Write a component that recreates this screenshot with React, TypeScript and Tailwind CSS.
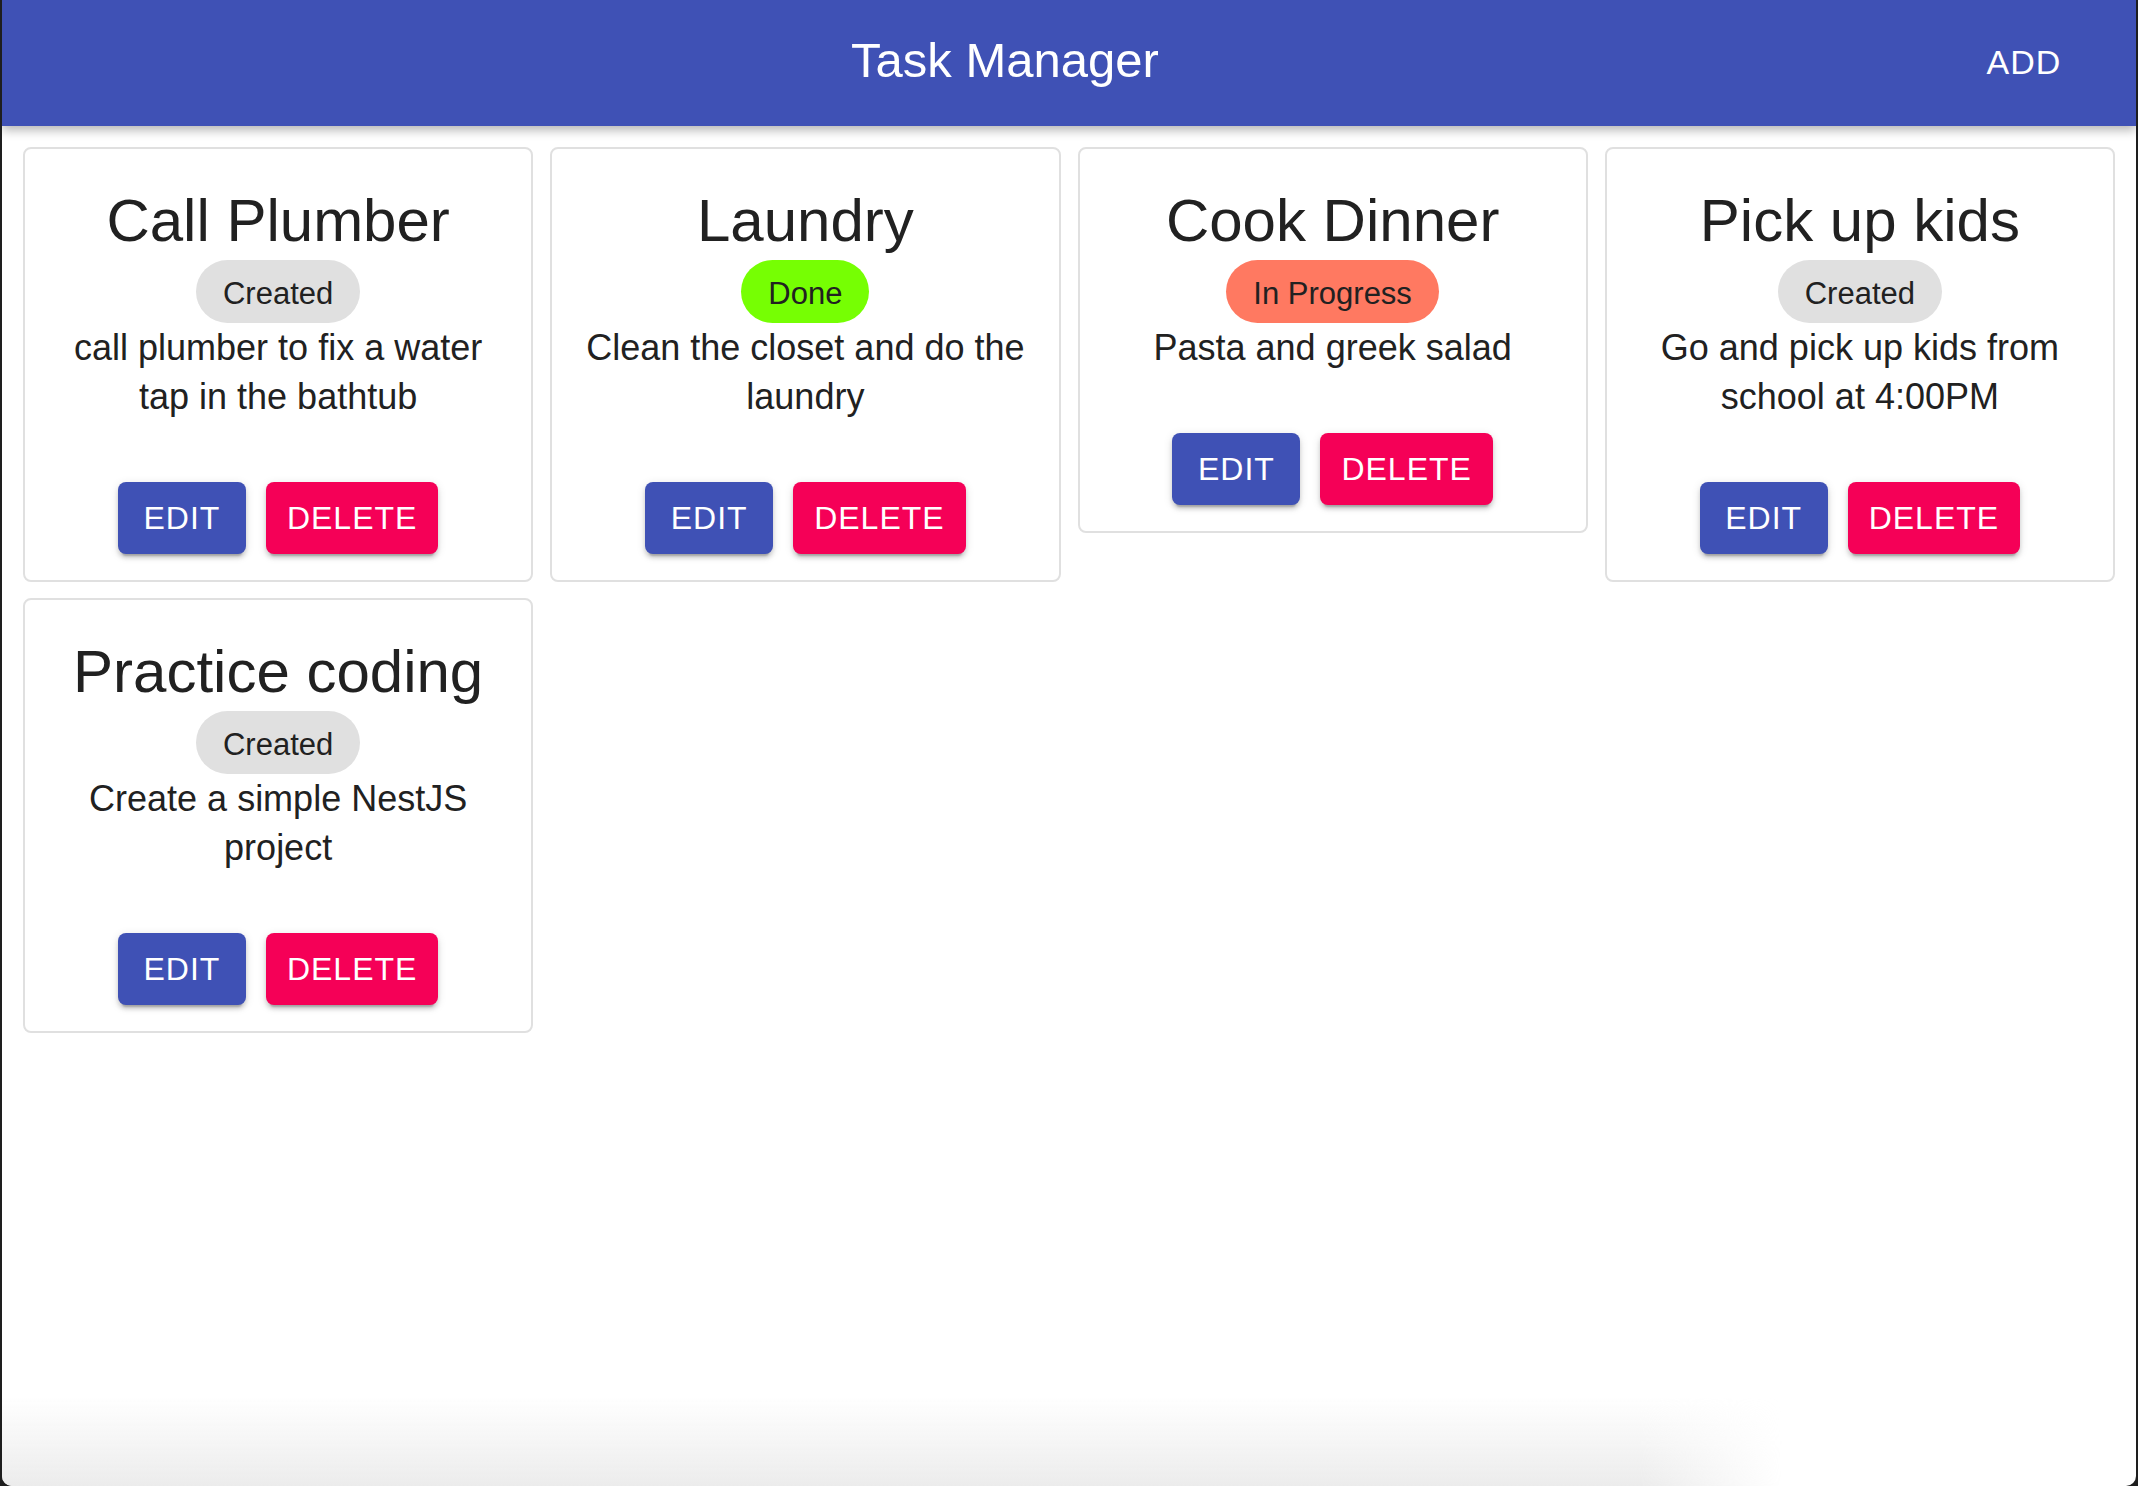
const tasks = [
  { title: 'Call Plumber', status: 'Created', description: 'call plumber to fix a water tap in the bathtub' },
  { title: 'Laundry', status: 'Done', description: 'Clean the closet and do the laundry' },
  { title: 'Cook Dinner', status: 'In Progress', description: 'Pasta and greek salad' },
  { title: 'Pick up kids', status: 'Created', description: 'Go and pick up kids from school at 4:00PM' },
  { title: 'Practice coding', status: 'Created', description: 'Create a simple NestJS project' },
];

function StatusChip({ status }: { status: string }) {
  const color =
    status === 'Done' ? 'bg-[#76ff03]' : status === 'In Progress' ? 'bg-[#ff7961]' : 'bg-[#e0e0e0]';
  return (
    <span className={`inline-flex h-[63px] items-center rounded-full px-[27px] pt-[6px] text-[31px] text-[#212121] ${color}`}>
      {status}
    </span>
  );
}

function TaskCard({ title, status, description }: { title: string; status: string; description: string }) {
  return (
    <div className="flex flex-col items-center rounded-lg border-2 border-[#e0e0e0] bg-white px-[30px] pt-[32px] pb-[26px] text-center">
      <h2 className="text-[60px] leading-[79px] text-[#212121]">{title}</h2>
      <StatusChip status={status} />
      <p className="text-[36px] leading-[49px] text-[#212121]">{description}</p>
      <div className="mt-[61px] flex gap-[20px]">
        <button className="h-[72px] min-w-[128px] rounded-lg bg-[#3f51b5] px-[21px] text-[32px] tracking-[1px] text-white shadow-[0_6px_2px_-4px_rgba(0,0,0,0.2),0_4px_4px_0_rgba(0,0,0,0.14),0_2px_10px_0_rgba(0,0,0,0.12)]">
          EDIT
        </button>
        <button className="h-[72px] min-w-[128px] rounded-lg bg-[#f50057] px-[21px] text-[32px] tracking-[1px] text-white shadow-[0_6px_2px_-4px_rgba(0,0,0,0.2),0_4px_4px_0_rgba(0,0,0,0.14),0_2px_10px_0_rgba(0,0,0,0.12)]">
          DELETE
        </button>
      </div>
    </div>
  );
}

export default function App() {
  return (
    <div className="h-screen bg-[#1e1e1e] px-[2px] font-['Liberation_Sans',Arial,sans-serif]">
      <div className="relative h-full overflow-hidden rounded-b-[10px] bg-white">
        {/* App bar */}
        <header className="relative z-10 flex h-[126px] items-center bg-[#3f51b5] px-[48px] text-white shadow-[0_4px_10px_rgba(0,0,0,0.3)]">
          <h1 className="flex-1 pb-[4px] text-center text-[49px]">Task Manager</h1>
          <button className="h-[72px] min-w-[128px] pb-[2px] text-[34px] tracking-[1px]">ADD</button>
        </header>

        {/* Task grid */}
        <main className="grid grid-cols-4 items-start gap-x-[17px] gap-y-[16px] px-[21px] pt-[21px]">
          {tasks.map(t => (
            <TaskCard key={t.title} {...t} />
          ))}
        </main>

        {/* bottom window shade */}
        <div className="pointer-events-none absolute bottom-0 left-0 h-[90px] w-[1780px] bg-linear-to-b from-white/0 to-[#ececec] [mask-image:linear-gradient(to_right,black_92%,transparent)]" />
      </div>
    </div>
  );
}
